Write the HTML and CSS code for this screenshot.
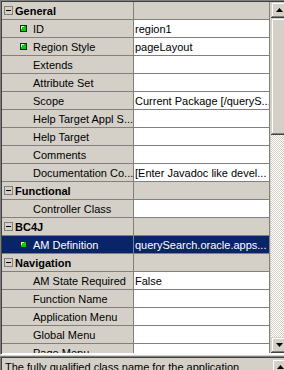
FILE: index.html
```html
<!DOCTYPE html>
<html lang="en">
<head>
    <meta charset="UTF-8">
    <title>Property Inspector</title>
    <link rel="stylesheet" href="styles.css">
</head>
<body>
    <div class="inspector">
        <div class="grid">
            <div class="rows">
                <div class="row group"><div class="name"><span class="toggle"></span>General</div><div class="value"></div></div>
                <div class="row"><div class="name"><span class="flag"><svg width="7" height="7" viewBox="0 0 7 7"><rect x="0" y="0" width="7" height="7" fill="#202020"/><rect x="1" y="1" width="5" height="5" fill="#00d000"/><rect x="1" y="1" width="3" height="1" fill="#e0ffe0"/><rect x="1" y="1" width="1" height="3" fill="#e0ffe0"/></svg></span>ID</div><div class="value">region1</div></div>
                <div class="row"><div class="name"><span class="flag"><svg width="7" height="7" viewBox="0 0 7 7"><rect x="0" y="0" width="7" height="7" fill="#202020"/><rect x="1" y="1" width="5" height="5" fill="#00d000"/><rect x="1" y="1" width="3" height="1" fill="#e0ffe0"/><rect x="1" y="1" width="1" height="3" fill="#e0ffe0"/></svg></span>Region Style</div><div class="value">pageLayout</div></div>
                <div class="row"><div class="name"><span class="flag"></span>Extends</div><div class="value"></div></div>
                <div class="row"><div class="name"><span class="flag"></span>Attribute Set</div><div class="value"></div></div>
                <div class="row"><div class="name"><span class="flag"></span>Scope</div><div class="value">Current Package [/queryS...</div></div>
                <div class="row"><div class="name"><span class="flag"></span>Help Target Appl S...</div><div class="value"></div></div>
                <div class="row"><div class="name"><span class="flag"></span>Help Target</div><div class="value"></div></div>
                <div class="row"><div class="name"><span class="flag"></span>Comments</div><div class="value"></div></div>
                <div class="row"><div class="name"><span class="flag"></span>Documentation Co...</div><div class="value">[Enter Javadoc like devel...</div></div>
                <div class="row group"><div class="name"><span class="toggle"></span>Functional</div><div class="value"></div></div>
                <div class="row"><div class="name"><span class="flag"></span>Controller Class</div><div class="value"></div></div>
                <div class="row group"><div class="name"><span class="toggle"></span>BC4J</div><div class="value"></div></div>
                <div class="row selected"><div class="name"><span class="flag"><svg width="7" height="7" viewBox="0 0 7 7"><rect x="0" y="0" width="7" height="7" fill="#202020"/><rect x="1" y="1" width="5" height="5" fill="#00d000"/><rect x="1" y="1" width="3" height="1" fill="#e0ffe0"/><rect x="1" y="1" width="1" height="3" fill="#e0ffe0"/></svg></span>AM Definition</div><div class="value">querySearch.oracle.apps...</div></div>
                <div class="row group"><div class="name"><span class="toggle"></span>Navigation</div><div class="value"></div></div>
                <div class="row"><div class="name"><span class="flag"></span>AM State Required</div><div class="value">False</div></div>
                <div class="row"><div class="name"><span class="flag"></span>Function Name</div><div class="value"></div></div>
                <div class="row"><div class="name"><span class="flag"></span>Application Menu</div><div class="value"></div></div>
                <div class="row"><div class="name"><span class="flag"></span>Global Menu</div><div class="value"></div></div>
                <div class="row"><div class="name"><span class="flag"></span>Page Menu</div><div class="value"></div></div>
            </div>
            <div class="vscroll">
                <div class="sb-btn"><svg width="7" height="4" viewBox="0 0 7 4"><path d="M3.5 0 L7 4 L0 4 Z" fill="#000"/></svg></div>
                <div class="sb-thumb"></div>
                <div class="sb-track"></div>
                <div class="sb-btn"><svg width="7" height="4" viewBox="0 0 7 4"><path d="M0 0 L7 0 L3.5 4 Z" fill="#000"/></svg></div>
            </div>
        </div>
        <div class="desc">
            <p>The fully qualified class name for the application</p>
            <div class="desc-scroll">
                <div class="sb-btn"><svg width="7" height="4" viewBox="0 0 7 4"><path d="M3.5 0 L7 4 L0 4 Z" fill="#000"/></svg></div>
            </div>
        </div>
    </div>
</body>
</html>
```

FILE: styles.css
```css
* {
    margin: 0;
    padding: 0;
    box-sizing: border-box;
}

html, body {
    overflow: hidden;
}

body {
    font-family: 'Liberation Sans', Arial, sans-serif;
    font-size: 11px;
    color: #000;
    background: #d4d0c8;
}

.inspector {
    width: 290px;
    height: 370px;
}

/* property grid */

.grid {
    display: flex;
    height: 355px;
    border-top: 1px solid #808080;
    border-left: 1px solid #808080;
    border-bottom: 1px solid #fff;
    box-shadow: inset 1px 1px 0 #404040, inset 0 -1px 0 #fff;
    padding: 1px 0 1px 1px;
}

.rows {
    flex: none;
    width: 268px;
    overflow: hidden;
    background: #fff;
}

.row {
    display: flex;
    height: 18px;
    border-bottom: 1px solid #808080;
    white-space: nowrap;
}

.name {
    display: flex;
    align-items: center;
    width: 132px;
    padding-left: 18px;
    background: #d4d0c8;
    border-right: 1px solid #808080;
    overflow: hidden;
}

.value {
    display: flex;
    align-items: center;
    width: 136px;
    padding-left: 1px;
    border-right: 1px solid #808080;
    overflow: hidden;
}

.flag {
    display: flex;
    flex: none;
    width: 7px;
    height: 7px;
    margin-right: 6px;
}

.group .name {
    padding-left: 2px;
    font-weight: 700;
}

.group .value {
    background: #d4d0c8;
}

.toggle {
    position: relative;
    flex: none;
    width: 9px;
    height: 9px;
    margin-right: 2px;
    border: 1px solid #808080;
}

.toggle::after {
    content: "";
    position: absolute;
    left: 1px;
    top: 3px;
    width: 5px;
    height: 1px;
    background: #000;
}

.selected .name,
.selected .value {
    background: #0a246a;
    color: #fff;
}

/* scrollbars */

.vscroll {
    display: flex;
    flex-direction: column;
    width: 16px;
    flex: none;
    margin-left: 1px;
}

.sb-btn {
    display: flex;
    align-items: center;
    justify-content: center;
    flex: none;
    width: 16px;
    height: 16px;
    background: #d4d0c8;
    box-shadow: inset -1px -1px 0 #404040, inset 1px 1px 0 #d4d0c8, inset -2px -2px 0 #808080, inset 2px 2px 0 #fff;
}

.sb-thumb {
    flex: none;
    height: 117px;
    background: #d4d0c8;
    box-shadow: inset -1px -1px 0 #404040, inset 1px 1px 0 #d4d0c8, inset -2px -2px 0 #808080, inset 2px 2px 0 #fff;
}

.sb-track {
    flex: 1;
    background: repeating-conic-gradient(#fff 0 25%, #d4d0c8 0 50%) 0 0 / 2px 2px;
}

/* description pane */

.desc {
    display: flex;
    height: 60px;
    margin-top: 1px;
    border-top: 1px solid #808080;
    border-left: 1px solid #808080;
    box-shadow: inset 1px 1px 0 #404040;
}

.desc p {
    flex: 1;
    padding: 4px 0 0 4px;
    white-space: nowrap;
}

.desc-scroll {
    flex: none;
    width: 16px;
    margin: 2px 2px 0 0;
}
```
